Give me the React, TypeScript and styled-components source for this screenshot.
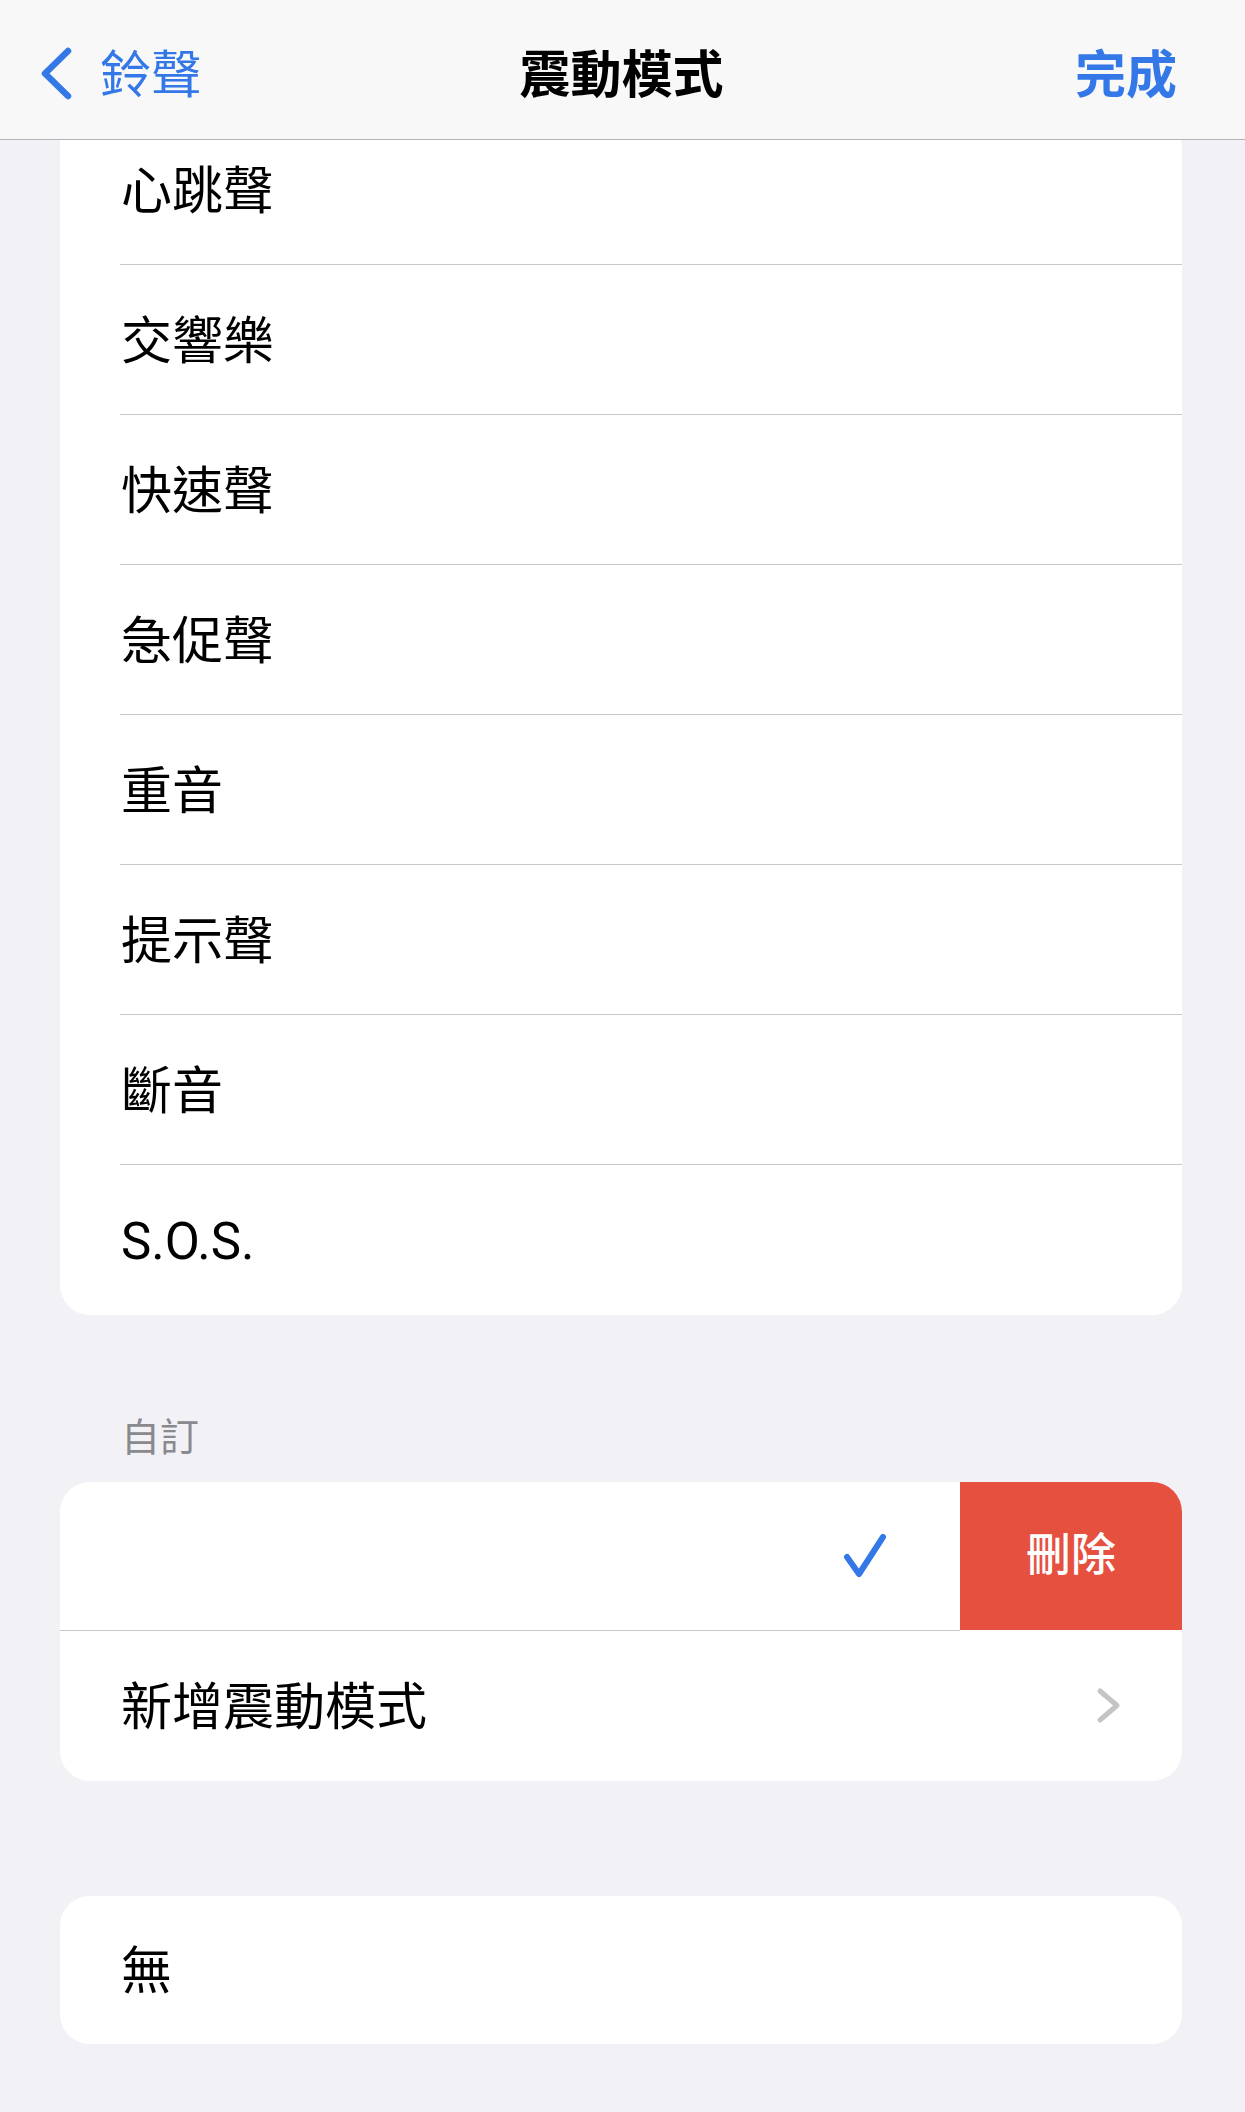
import React from 'react';
import styled, { createGlobalStyle } from 'styled-components';

const FONT = `Roboto, 'Noto Sans CJK TC', 'Noto Sans CJK SC', sans-serif`;
const BLUE = '#3478e8';

const GlobalStyle = createGlobalStyle`
  html, body {
    margin: 0;
    padding: 0;
    background: #f2f2f6;
  }
  body {
    font-family: ${FONT};
    color: #000;
    -webkit-font-smoothing: antialiased;
  }
`;

const PATTERNS = ['心跳聲', '交響樂', '快速聲', '急促聲', '重音', '提示聲', '斷音', 'S.O.S.'];

const BackChevron = () => (
  <svg width="36" height="58" viewBox="0 0 36 58" fill="none">
    <path d="M30 6 L7 28.5 L30 51" stroke={BLUE} strokeWidth="6.5" strokeLinecap="round" strokeLinejoin="round" />
  </svg>
);

const CheckIcon = () => (
  <svg width="50" height="50" viewBox="0 0 50 50" fill="none">
    <path d="M7 26 L19 43 L43 6" stroke={BLUE} strokeWidth="6" strokeLinecap="round" strokeLinejoin="round" />
  </svg>
);

const DisclosureIcon = () => (
  <svg width="30" height="44" viewBox="0 0 30 44" fill="none">
    <path d="M6 7 L23 21.5 L6 36" stroke="#c4c4c7" strokeWidth="5" strokeLinecap="round" strokeLinejoin="round" />
  </svg>
);

const App: React.FC = () => {
  return (
    <>
      <GlobalStyle />
      <Screen>
        <NavBar>
          <BackButton>
            <BackChevron />
            <NavText>鈴聲</NavText>
          </BackButton>
          <Title>震動模式</Title>
          <DoneButton>完成</DoneButton>
        </NavBar>

        <Content>
          <Card>
            {PATTERNS.map((name) => (
              <Row key={name}>
                <RowBody>
                  <Label>{name}</Label>
                </RowBody>
              </Row>
            ))}
          </Card>

          <SectionHeader>自訂</SectionHeader>

          <Card>
            <SwipeRow>
              <SwipeContent>
                <CheckIcon />
              </SwipeContent>
              <DeleteAction>刪除</DeleteAction>
            </SwipeRow>
            <Row>
              <RowBody>
                <Label>新增震動模式</Label>
                <DisclosureIcon />
              </RowBody>
            </Row>
          </Card>

          <Card $spaced>
            <Row $height={148}>
              <RowBody>
                <Label>無</Label>
              </RowBody>
            </Row>
          </Card>
        </Content>
      </Screen>
    </>
  );
};

const Screen = styled.div`
  min-height: 2112px;
  background: #f2f2f6;
`;

const NavBar = styled.header`
  position: fixed;
  top: 0;
  left: 0;
  right: 0;
  z-index: 10;
  height: 140px;
  box-sizing: border-box;
  padding: 8px 40px 0 38px;
  display: grid;
  grid-template-columns: 1fr auto 1fr;
  align-items: center;
  background: #f8f8f8;
  border-bottom: 1px solid #b3b3b5;
`;

const BackButton = styled.div`
  display: flex;
  align-items: center;
  gap: 26px;
  color: ${BLUE};
`;

const NavText = styled.span`
  font-size: 51px;
  line-height: 60px;
  padding-top: 4px;
`;

const Title = styled.div`
  font-size: 51px;
  line-height: 60px;
  padding-top: 4px;
  font-weight: 700;
  color: #000;
`;

const DoneButton = styled.div`
  justify-self: end;
  padding: 4px 28px 0 0;
  color: ${BLUE};
  font-size: 51px;
  line-height: 60px;
  font-weight: 700;
`;

const Content = styled.main`
  padding: 115px 63px 68px 60px;
  display: flex;
  flex-direction: column;
`;

const Card = styled.section<{ $spaced?: boolean }>`
  background: #fff;
  border-radius: 30px;
  overflow: hidden;
  margin-top: ${({ $spaced }) => ($spaced ? '115px' : '0')};
`;

const Row = styled.div<{ $height?: number }>`
  height: ${({ $height }) => $height ?? 150}px;
  padding-left: 60px;
  display: flex;

  &:last-child > div {
    border-bottom: none;
  }
`;

const RowBody = styled.div`
  flex: 1;
  display: flex;
  align-items: center;
  justify-content: space-between;
  padding: 0 58px 0 1px;
  border-bottom: 1px solid #c8c8cb;
`;

const Label = styled.span`
  font-size: 51px;
  line-height: 60px;
  padding-top: 4px;
  color: #000;
`;

const SectionHeader = styled.h2`
  margin: 0;
  padding: 100px 0 21px 61px;
  font-size: 39px;
  line-height: 46px;
  font-weight: 400;
  color: #8a8a8e;
`;

const SwipeRow = styled.div`
  display: flex;
  height: 149px;
`;

const SwipeContent = styled.div`
  flex: 1;
  display: flex;
  align-items: center;
  justify-content: flex-end;
  padding: 0 70px 0 0;
  border-bottom: 1px solid #c8c8cb;
`;

const DeleteAction = styled.div`
  width: 222px;
  height: 148px;
  display: flex;
  align-items: center;
  justify-content: center;
  background: #e5503f;
  color: #fff;
  font-size: 45px;
  line-height: 52px;
  font-weight: 500;
`;

export default App;
